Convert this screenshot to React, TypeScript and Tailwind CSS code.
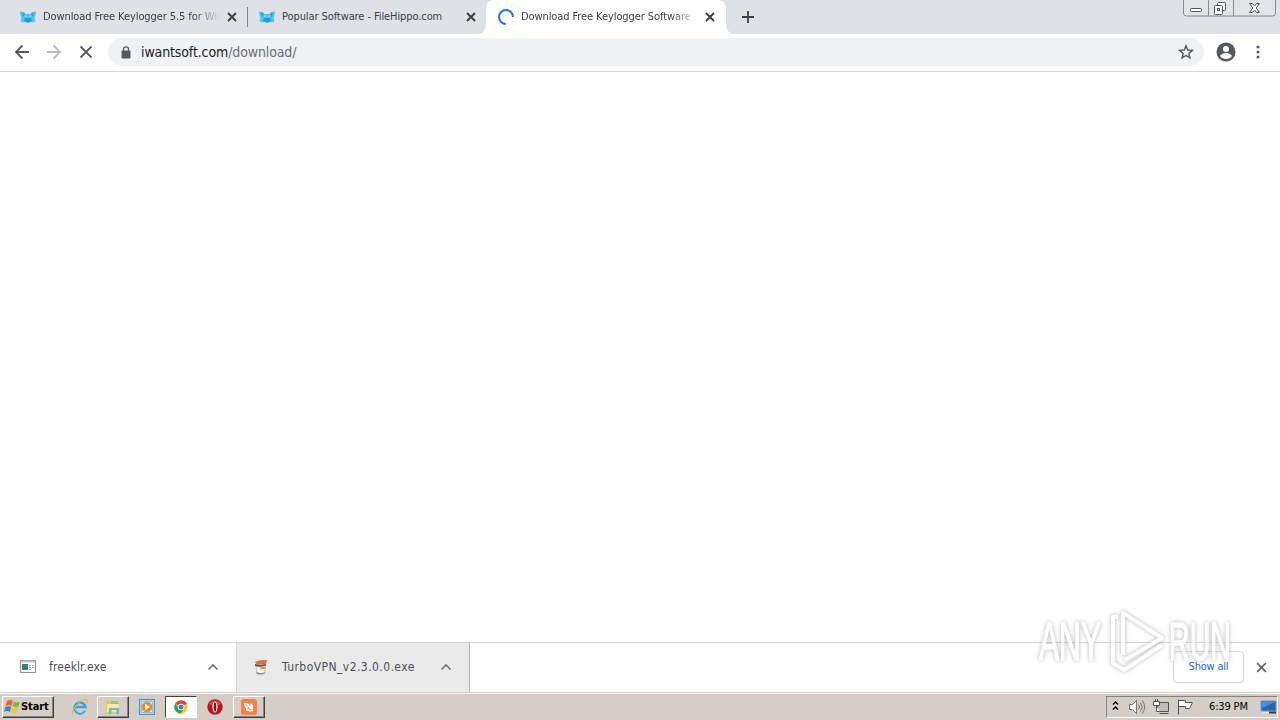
import type { ReactNode } from "react";
import clsx from "clsx";

function HippoIcon() {
  return (
    <svg width="16" height="12" viewBox="0 0 16 12" className="shrink-0">
      <path d="M0 .5 4 1l1.500 2h5l1.500-2 4-.5-.5 4L14.500 7l1 3-2 1.500-2.500-.5-3 1-3-1-2.500.5L.5 10l1-3L.5 4.500z" fill="#4fc4ec" />
      <path d="M2 1.500 5 3 3 6zM14 1.500 11 3l2 3z" fill="#2f9fcf" />
      <path d="M5 7h6l1 3-4 1.500L4 10z" fill="#1aa3dc" />
      <path d="M5 5.200h1.500M9.500 5.200H11" stroke="#b5eafa" />
    </svg>
  );
}

function Spinner() {
  return (
    <svg width="16" height="16" viewBox="0 0 16 16" className="shrink-0">
      <path d="M8 15A7 7 0 1 1 15 8" fill="none" stroke="#2b73d8" strokeWidth="2" />
    </svg>
  );
}

function Cross({ size, color, width }: { size: number; color: string; width: number }) {
  return (
    <svg width={size} height={size} viewBox="0 0 10 10" className="shrink-0">
      <path d="M1 1l8 8M9 1L1 9" stroke={color} strokeWidth={width} fill="none" />
    </svg>
  );
}

interface TabProps {
  icon: ReactNode;
  title: string;
  active?: boolean;
  className: string;
  fade?: boolean;
}

function Tab({ icon, title, active, className, fade }: TabProps) {
  return (
    <div className={clsx("flex h-[34px] shrink-0 items-center", active && "relative rounded-t-lg bg-white", className)}>
      {icon}
      <span
        className={clsx(
          "ml-[7px] w-[178px] overflow-hidden whitespace-nowrap pt-px text-[11px] tracking-[-0.09px] text-[#3c4043]",
          fade && "[mask-image:linear-gradient(to_right,#000_150px,transparent_177px)]"
        )}
      >
        {title}
      </span>
      <span className="ml-[6px] flex">
        <Cross size={10} color="#3c4043" width={1.9} />
      </span>
      {active && (
        <>
          <i className="absolute bottom-0 -left-2 size-2 bg-[radial-gradient(circle_at_0_0,#dee1e6_7.5px,#fff_8px)]" />
          <i className="absolute -right-2 bottom-0 size-2 bg-[radial-gradient(circle_at_100%_0,#dee1e6_7.5px,#fff_8px)]" />
        </>
      )}
    </div>
  );
}

function WindowButtons() {
  return (
    <svg width="95" height="18" viewBox="0 0 95 18" className="ml-auto mr-[3px] self-start">
      <path d="M1.500-1v14q0 3 3 3h86q3 0 3-3V-1M26.500 0v16M51.500 0v16" fill="#e2e4e8" stroke="#868a90" />
      <g fill="#fff" stroke="#50545a">
        <rect x="8.500" y="8.500" width="11" height="3" rx="1" />
        <rect x="35.500" y="2.500" width="8" height="8" rx="1" />
        <rect x="32.500" y="5.500" width="8" height="9" rx="1" />
        <rect x="35.500" y="8.500" width="2" height="2" />
        <path d="M67.500 3.500h3l2 2.500 2-2.500h3l-3.300 4.500 3.300 4.500h-3l-2-2.500-2 2.500h-3l3.300-4.500z" />
      </g>
    </svg>
  );
}

function Toolbar() {
  return (
    <div className="flex h-[38px] shrink-0 items-center border-b border-[#d5d6d8] bg-white pb-px">
      <svg width="84" height="16" viewBox="0 0 84 16" className="ml-[14px] shrink-0" fill="none" strokeWidth="1.8">
        <path d="M15 8H2M8.500 1.500 2 8l6.500 6.500" stroke="#55585c" />
        <path d="M33 8h13M39.500 1.500 46 8l-6.500 6.500" stroke="#b9bbbe" />
        <path d="M66.500 2.500l11 11M77.500 2.500l-11 11" stroke="#55585c" />
      </svg>
      <div className="ml-[10px] flex h-7 w-[1096px] items-center rounded-full bg-[#eff2f5]">
        <svg width="10" height="13" viewBox="0 0 10 13" className="ml-[13px]">
          <rect x="0.500" y="4.500" width="9" height="8" rx="1" fill="#55585c" />
          <path d="M2.500 5V3.300a2.500 2.500 0 0 1 5 0V5" fill="none" stroke="#55585c" strokeWidth="1.3" />
        </svg>
        <span className="ml-[10px] whitespace-nowrap text-[14px] tracking-[-0.12px] text-[#6a6e73]">
          <span className="text-[#202124]">iwantsoft.com</span>/download/
        </span>
        <svg width="16" height="16" viewBox="0 0 16 16" className="ml-auto mr-[10px]">
          <path
            d="M8 1.700 9.700 6l4.700.400-3.600 3 1.100 4.500L8 11.500l-3.900 2.400 1.100-4.500-3.600-3L6.300 6z"
            fill="none"
            stroke="#55585c"
            strokeWidth="1.4"
          />
        </svg>
      </div>
      <svg width="20" height="20" viewBox="0 0 20 20" className="ml-3 shrink-0">
        <circle cx="10" cy="10" r="9.500" fill="#55585f" />
        <circle cx="10" cy="7" r="3" fill="#fff" />
        <path d="M4 14q2-3 6-3t6 3q-2 3-6 3t-6-3z" fill="#fff" />
      </svg>
      <svg width="4" height="14" viewBox="0 0 4 14" className="ml-[20px] shrink-0" fill="#55585c">
        <circle cx="2" cy="2" r="1.500" />
        <circle cx="2" cy="7" r="1.500" />
        <circle cx="2" cy="12" r="1.500" />
      </svg>
    </div>
  );
}

function Chevron() {
  return (
    <svg width="12" height="8" viewBox="0 0 12 8" className="shrink-0">
      <path d="M1.500 6.500 6 2l4.500 4.500" fill="none" stroke="#707377" strokeWidth="1.600" />
    </svg>
  );
}

function DownloadShelf() {
  return (
    <div className="flex h-[50px] shrink-0 border-t border-[#d5d6d8] bg-white">
      <div className="flex w-[237px] items-center border-r border-[#d5d6d8] pb-[2px]">
        <svg width="16" height="13" viewBox="0 0 16 13" className="ml-5">
          <rect x="0.500" y="0.500" width="15" height="12" fill="#fff" stroke="#8c9296" />
          <path d="M1 1.500h14" stroke="#b8c2ca" strokeWidth="2" />
          <rect x="2" y="4" width="6" height="6" fill="#397d78" />
          <path d="M9 5.500h2M9 7.500h2M9 9.500h2M12 5.500h2M12 7.500h2" stroke="#9aa6ac" />
        </svg>
        <span className="ml-[13px] text-[12px] tracking-[0.1px] text-[#4c4f53]">freeklr.exe</span>
        <span className="ml-auto mr-[17px] flex"><Chevron /></span>
      </div>
      <div className="flex w-[233px] items-center border-r border-[#b5b6b8] bg-[#eaeaea] pb-[2px]">
        <svg width="14" height="16" viewBox="0 0 14 16" className="ml-[17px] shrink-0">
          <path d="M2 7h9v7q-4 2-8 0z" fill="#f6f4f2" stroke="#b5b2b0" strokeWidth=".7" />
          <path d="M1 3q4-2.500 12-2l-1 4-9 .500z" fill="#e0702c" />
          <path d="M1 5q5 1.500 11 0v1.500q-5 2-11 .500z" fill="#5a5350" />
          <path d="M6 8h6l-1 2-4 .500z" fill="#ef8b45" />
          <path d="M2 13q4 2 8 .500l2 .500q-5 2.500-9 1z" fill="#8b8988" />
        </svg>
        <span className="ml-[14px] text-[12px] tracking-[0.44px] text-[#4c4f53]">TurboVPN_v2.3.0.0.exe</span>
        <span className="ml-auto mr-[17px] flex"><Chevron /></span>
      </div>
      <div className="mt-2 mr-[12px] ml-auto flex h-8 w-[71px] items-center justify-center rounded border border-[#d5d6d9] text-[11px] tracking-[-0.2px] text-[#1967c8]">
        Show all
      </div>
      <span className="mr-[13px] flex items-center"><Cross size={11} color="#606367" width={1.5} /></span>
    </div>
  );
}

function Watermark() {
  return (
    <svg width="228" height="76" viewBox="0 0 228 76" className="pointer-events-none absolute top-[603px] left-[1032px]">
      <g
        fill="#fff"
        opacity=".85"
        className="font-['Liberation_Sans_Narrow','Liberation_Sans',sans-serif] [filter:drop-shadow(0_0_2px_#aaa)]"
        fontSize="53"
      >
        <g stroke="#fff" strokeWidth="1.5">
          <text x="7" y="57" textLength="62" lengthAdjust="spacingAndGlyphs">ANY</text>
          <text x="137" y="57" textLength="62" lengthAdjust="spacingAndGlyphs">RUN</text>
        </g>
        <g fill="none" stroke="#fff" strokeWidth="4" strokeLinejoin="round">
          <path d="M91 52V10l39 25-37 22" />
          <path d="M86 14h-5v46l11 7 38-25" />
        </g>
      </g>
    </svg>
  );
}

const RAISED = "border border-t-white border-l-white border-r-[#404040] border-b-[#404040] shadow-[inset_-1px_-1px_0_#87837e]";

function StartButton() {
  return (
    <div className={clsx("ml-[2px] flex h-[22px] w-[52px] items-center", RAISED)}>
      <svg width="17" height="16" viewBox="0 0 17 16" className="ml-px shrink-0">
        <path d="M3 2q3-2 6 0L7.500 7q-3-1.500-6 0z" fill="#ed6330" />
        <path d="M10 2.500q3 1.500 6 0L14.500 7.500q-3 1.500-6 0z" fill="#7fb83b" />
        <path d="M1.200 8q3-1.500 6 0L6 13q-3-2-6 0z" fill="#3688ce" />
        <path d="M8.200 8.500q3 1.500 6 0L13 13.500q-3 1.500-6 0z" fill="#f9c52e" />
      </svg>
      <span className="pt-px text-[11px] font-bold tracking-[-0.1px] text-black">Start</span>
    </div>
  );
}

function Taskbar() {
  return (
    <div className="flex h-7 shrink-0 items-center border-t border-[#d5cec6] bg-[#d5cec6] shadow-[inset_0_1px_0_#fff]">
      <StartButton />
      <svg width="18" height="18" viewBox="0 0 18 18" className="ml-[17px] shrink-0" fill="none">
        <path d="M14 12.500A5.500 5.500 0 1 1 14.500 9H5" stroke="#3ba2de" strokeWidth="2.600" />
        <path d="M13.500 12.500A5.500 5.500 0 0 1 4 11" stroke="#8bd5f3" />
        <path d="M2.500 15.500Q0 16 3.500 10 9 2 14.500 1.500q3 0 1 3.500" stroke="#e6b444" strokeWidth="1.200" />
      </svg>
      <div className={clsx("ml-[8px] flex h-[22px] w-8 items-center justify-center", RAISED)}>
        <svg width="16" height="16" viewBox="0 0 16 16">
          <path d="M1 2h5l1 2h7v11H1z" fill="#ebc45c" />
          <path d="M2 5h12v8H2z" fill="#fbeaa0" />
          <path d="M6 2h7v3H6z" fill="#8ac889" />
          <path d="M4 15V9h10v6h-2.500v-4h-5v4z" fill="#69b6df" />
        </svg>
      </div>
      <svg width="16" height="16" viewBox="0 0 16 16" className="ml-[10px] shrink-0">
        <rect x="0.500" y="0.500" width="15" height="15" fill="#a7d4f1" stroke="#4d94ca" />
        <rect x="2.500" y="2.500" width="11" height="11" fill="#d9eefa" stroke="#8dc0e4" />
        <circle cx="8" cy="8" r="5.300" fill="#ee8b23" />
        <path d="M6.200 4.800 11 8l-4.800 3.200z" fill="#fff" />
      </svg>
      <div className="ml-[10px] flex h-[22px] w-8 items-center justify-center border border-t-[#404040] border-r-white border-b-white border-l-[#404040] bg-white">
        <svg width="14" height="14" viewBox="0 0 14 14">
          <circle cx="7" cy="7" r="6.700" fill="#f5c638" />
          <path d="M7 7 1.200 3.600a6.700 6.700 0 0 1 11.600 0z" fill="#df4637" />
          <path d="M7 7H4L1.200 3.600A6.700 6.700 0 0 0 7 13.700L9.500 9z" fill="#36a456" />
          <circle cx="7" cy="7" r="3.200" fill="#fff" />
          <circle cx="7" cy="7" r="2.500" fill="#3d7de0" />
        </svg>
      </div>
      <svg width="16" height="16" viewBox="0 0 16 16" className="ml-[10px] shrink-0">
        <circle cx="8" cy="8" r="7.700" fill="#b8161d" />
        <path d="M2 5a7 7 0 0 1 12 0q-6 3-12 0" fill="#d9474b" />
        <ellipse cx="8" cy="8" rx="2.500" ry="5.500" fill="#fff" />
        <ellipse cx="8" cy="8" rx="1.300" ry="4.800" fill="#85141a" />
      </svg>
      <div className={clsx("ml-[10px] flex h-[22px] w-8 items-center justify-center", RAISED)}>
        <svg width="16" height="16" viewBox="0 0 16 16">
          <rect width="16" height="16" rx="3" fill="#f68146" />
          <path d="M3 4q4-1 6 3l1-3q3.500 3 1.500 6.500l1 1.500-3 .500Q4 12 5 9 3 7 3 4z" fill="#fff" />
          <path d="M4.500 5.500 10 11M6 9.500l3 .500" stroke="#f68146" strokeWidth=".9" />
        </svg>
      </div>
      <div className="mr-[2px] ml-auto flex h-[22px] w-[172px] items-center border border-t-[#87837e] border-r-white border-b-white border-l-[#87837e]">
        <svg width="94" height="18" viewBox="0 0 94 18" className="shrink-0" fill="none">
          <path d="M6 6.500 8.500 4 11 6.500M6 11.500 8.500 9l2.500 2.500" stroke="#000" strokeWidth="1.400" />
          <g stroke="#77716b">
            <path d="M22.500 6.500h3l4-4v13l-4-4h-3z" fill="#fff" />
            <path d="M31.500 6.500q2 2.500 0 5M33.500 4.500q3 4.500 0 9M35.500 2.500q4 6.500 0 13" />
            <path d="M50.500 4.500h11v9h-11zM52.500 15.500h9" fill="#c4beb7" stroke="#55504b" />
            <path d="M46.500 3.500h6v4h-6zM49.500 8v5.500h3M48.500 1v3M50.500 1v3" fill="#fff" stroke="#55504b" />
            <path d="M71.500 1.500v15M71.500 2.500h7v2h7l-2 4 -1 2h-4v-2h-7z" fill="#fff" stroke="#55504b" />
          </g>
        </svg>
        <span className="ml-[8px] whitespace-nowrap pt-px text-[11px] tracking-[-0.15px] text-black">6:39 PM</span>
        <svg width="17" height="14" viewBox="0 0 17 14" className="ml-auto shrink-0">
          <rect x="1" y="1" width="15" height="10" fill="#2464b4" stroke="#789ac4" />
          <path d="M2 2h13L2 8z" fill="#4c91da" />
          <path d="M3 12.500h6" stroke="#e4eef7" />
          <path d="M9 12.500h7" stroke="#263d5a" strokeWidth="2" />
        </svg>
      </div>
    </div>
  );
}

export default function App() {
  return (
    <div className="relative flex h-[720px] w-[1280px] flex-col overflow-hidden bg-white font-['DejaVu_Sans_Condensed','DejaVu_Sans',sans-serif]">
      <div className="flex h-[34px] shrink-0 items-center bg-[#dee1e6]">
        <Tab icon={<HippoIcon />} title="Download Free Keylogger 5.5 for Win" className="w-[227px] ml-5" fade />
        <div className="h-5 w-px shrink-0 bg-[#85888d]" />
        <Tab icon={<HippoIcon />} title="Popular Software - FileHippo.com" className="w-[227px] ml-[11px]" />
        <Tab icon={<Spinner />} title="Download Free Keylogger Software" className="w-[240px] pl-3" active fade />
        <svg width="12" height="12" viewBox="0 0 12 12" className="ml-4 shrink-0">
          <path d="M6 0v12M0 6h12" stroke="#3c4043" strokeWidth="1.800" />
        </svg>
        <WindowButtons />
      </div>
      <Toolbar />
      <main className="flex-1" />
      <DownloadShelf />
      <Taskbar />
      <Watermark />
    </div>
  );
}
